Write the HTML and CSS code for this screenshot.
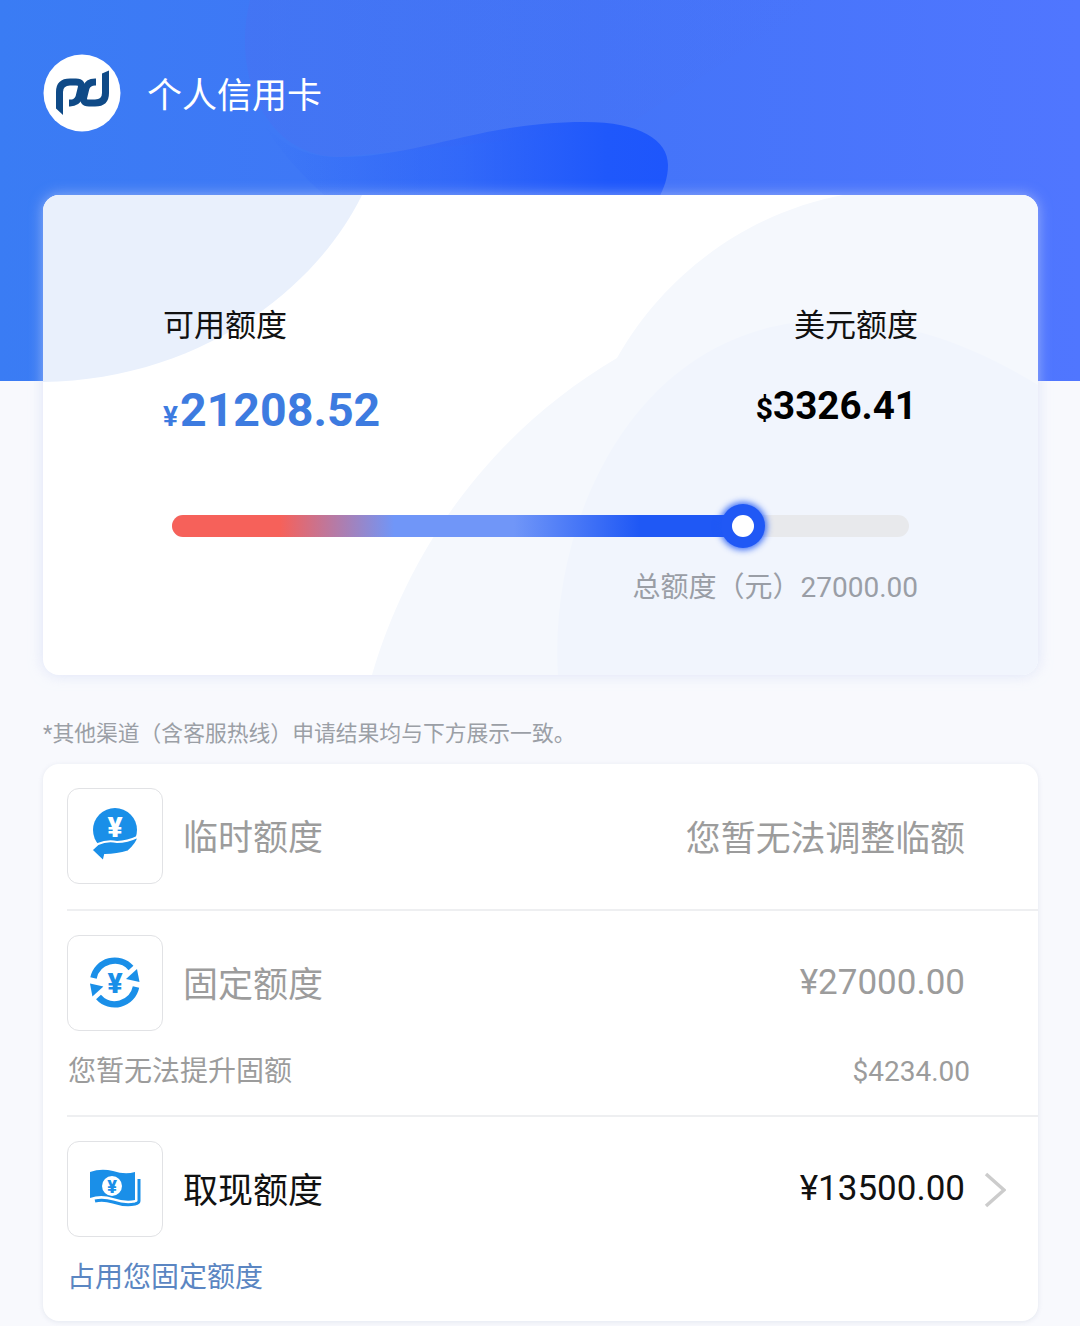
FILE: index.html
```html
<!DOCTYPE html>
<html lang="zh-CN">
<head>
<meta charset="utf-8">
<title>个人信用卡</title>
<link rel="stylesheet" href="styles.css">
</head>
<body>
<div class="page">
  <header class="hero">
    <svg class="hero-art" viewBox="0 0 1080 381" preserveAspectRatio="none" aria-hidden="true">
      <defs>
        <linearGradient id="heroBg" x1="0" y1="0" x2="1" y2="0"><stop offset="0" stop-color="#3a7cf4"/><stop offset=".55" stop-color="#4374f8"/><stop offset="1" stop-color="#5076ff"/></linearGradient>
        <linearGradient id="lightBlob" x1="0" y1="0" x2="1" y2="0"><stop offset="0" stop-color="#4a6ff0" stop-opacity=".4"/><stop offset="1" stop-color="#4a6ff0" stop-opacity="0"/></linearGradient>
        <linearGradient id="darkBlob" x1="0" y1="0" x2="1" y2="0"><stop offset="0" stop-color="#1f58fb" stop-opacity="0"/><stop offset=".5" stop-color="#1f58fb" stop-opacity=".45"/><stop offset=".85" stop-color="#1f58fb"/><stop offset="1" stop-color="#1e56fc"/></linearGradient>
      </defs>
      <rect width="1080" height="381" fill="url(#heroBg)"/>
      <path d="M250 0C232 70 262 157 340 157L620 130L820 0Z" fill="url(#lightBlob)"/>
      <path d="M260 120C285 150 312 157 340 157C420 157 480 122 585 122C640 122 668 140 668 165C668 178 664 188 658 200H330C300 175 280 150 260 120Z" fill="url(#darkBlob)"/>
    </svg>
    <div class="brand">
      <svg class="logo" viewBox="0 0 78 78" aria-hidden="true">
        <circle cx="39" cy="39" r="38.5" fill="#fff"/>
        <path class="logo-p" d="M16.5 54V38Q16.5 28 27 28H33Q40 28 38 35L36 43Q34 49 27 49H26"/>
        <path class="logo-p" d="M62.5 23V39Q62.5 49 52 49H46Q39 49 41 42L43 34Q45 28 52 28H53"/>
        <path class="logo-end" d="M13 52H20V61L13 54.5Z"/>
        <path class="logo-end" d="M59 25H66V16.5L59 19.5Z"/>
      </svg>
      <h1 class="brand-name">个人信用卡</h1>
    </div>
  </header>

  <main class="content">
    <section class="limit-card">
      <svg class="card-art" viewBox="0 0 995 480" preserveAspectRatio="none" aria-hidden="true">
        <path d="M0 0H319C270 100 150 185 0 187Z" fill="#e9f0fc"/>
        <path d="M800 0C720 15 630 65 574 163C460 230 370 340 329 480H995V0Z" fill="#f5f8fd"/>
        <path d="M515 480C505 330 590 125 790 125C860 125 930 150 995 190V480Z" fill="#f1f5fd"/>
      </svg>
      <div class="limit-row">
        <div class="limit-col">
          <div class="limit-label">可用额度</div>
          <div class="amount amount-cny"><span class="amount-sign">¥</span>21208.52</div>
        </div>
        <div class="limit-col limit-col-right">
          <div class="limit-label">美元额度</div>
          <div class="amount amount-usd"><span class="amount-sign">$</span>3326.41</div>
        </div>
      </div>
      <div class="slider">
        <div class="slider-fill"></div>
        <div class="slider-thumb"></div>
      </div>
      <div class="total">总额度（元）27000.00</div>
    </section>

    <p class="note">*其他渠道（含客服热线）申请结果均与下方展示一致。</p>

    <section class="list">
      <div class="item">
        <div class="item-head">
          <div class="icon-box">
            <svg viewBox="1 1 94 94" class="icon" aria-hidden="true">
              <circle cx="48" cy="42" r="22" fill="#1a8fe8"/>
              <text x="48" y="48.5" class="icon-yen icon-yen-lg">¥</text>
              <path d="M24.5 62L31 56Q40 52 50 54Q60 54 71.5 48.5Q70 56 61 63.5Q50 67 38 67L36.5 73.5Z" fill="#1a8fe8" stroke="#fff" stroke-width="2"/>
            </svg>
          </div>
          <div class="item-label muted">临时额度</div>
          <div class="item-value muted cjk-value">您暂无法调整临额</div>
        </div>
      </div>

      <div class="item">
        <div class="item-head">
          <div class="icon-box">
            <svg viewBox="1 1 94 94" class="icon" aria-hidden="true">
              <path d="M26.5 43A21.7 21.7 0 0 1 64 33" class="icon-arc"/>
              <path d="M69 52A21.7 21.7 0 0 1 31.5 62" class="icon-arc"/>
              <path d="M59 44L72.5 47L70 34Z" fill="#1a8fe8"/>
              <path d="M36.4 51.4L23 48.4L25.4 61.4Z" fill="#1a8fe8"/>
              <text x="48" y="57.5" class="icon-yen icon-yen-blue">¥</text>
            </svg>
          </div>
          <div class="item-label muted">固定额度</div>
          <div class="item-value muted">¥27000.00</div>
        </div>
        <div class="item-sub">
          <span>您暂无法提升固额</span>
          <span>$4234.00</span>
        </div>
      </div>

      <div class="item item-last">
        <div class="item-head">
          <div class="icon-box">
            <svg viewBox="1 1 94 94" class="icon" aria-hidden="true">
              <path d="M23 31Q34 27 46 30Q58 34 68 31V59Q58 61 46 57Q34 53 23 57Z" fill="#1a8fe8"/>
              <path d="M72 38V60Q72 62 68 63Q58 65 46 61Q36 58 28 60" fill="none" stroke="#1a8fe8" stroke-width="3"/>
              <circle cx="45" cy="45" r="10" fill="#fff"/>
              <text x="45" y="51.5" class="icon-yen icon-yen-sm">¥</text>
            </svg>
          </div>
          <div class="item-label">取现额度</div>
          <div class="item-value">¥13500.00</div>
          <svg class="chevron" viewBox="0 0 22 36" aria-hidden="true"><path d="M2 2L20 18L2 34"/></svg>
        </div>
        <div class="item-link">占用您固定额度</div>
      </div>
    </section>
  </main>
</div>
</body>
</html>
```
FILE: styles.css
```css
* { box-sizing: border-box; }
html, body { margin: 0; padding: 0; }
body {
  width: 1080px;
  height: 1326px;
  overflow: hidden;
  background: #f8f9fd;
  font-family: Roboto, "Noto Sans CJK SC", sans-serif;
}
.page { position: relative; height: 1326px; overflow: hidden; }

.hero { position: relative; height: 381px; overflow: hidden; }
.hero-art { position: absolute; inset: 0; width: 100%; height: 100%; display: block; }
.brand { position: relative; display: flex; align-items: center; gap: 26px; padding: 54px 0 0 43px; }
.logo { width: 78px; height: 78px; display: block; }
.logo-p { fill: none; stroke: #0f4a87; stroke-width: 7; }
.logo-end { fill: #0f4a87; }
.brand-name { margin: 0; padding-top: 8px; font-size: 35px; font-weight: 400; color: #fff; line-height: 70px; }

.content { position: relative; margin-top: -186px; padding: 0 42px 0 43px; }

.limit-card {
  position: relative;
  height: 480px;
  padding: 109px 120px 0 120px;
  background: #fff;
  border-radius: 16px;
  overflow: hidden;
  box-shadow: 0 0 14px rgba(205, 215, 245, .6);
}
.card-art { position: absolute; inset: 0; width: 100%; height: 100%; display: block; }
.limit-row { position: relative; display: flex; justify-content: space-between; }
.limit-col { display: flex; flex-direction: column; align-items: flex-start; }
.limit-col-right { align-items: flex-end; }
.limit-label { font-size: 31px; line-height: 44px; color: #111; }
.amount { font-weight: 700; line-height: 60px; }
.amount-cny { color: #3d7be0; font-size: 46.5px; margin-top: 32px; }
.amount-cny .amount-sign { margin-right: 2px; }
.amount-usd { color: #000; font-size: 38.6px; margin-top: 28px; margin-right: 1px; }
.amount-sign { font-size: 28px; }
.amount-usd .amount-sign { font-size: 30px; }

.slider { position: relative; margin: 68px 9px 0 9px; height: 22px; border-radius: 11px; background: #e8e9ec; }
.slider-fill {
  position: absolute; left: 0; top: 0; bottom: 0; width: 570px;
  border-radius: 11px 0 0 11px;
  background: linear-gradient(90deg, #f6615a 0, #f6615a 19%, #7096f8 39%, #7096f8 60%, #1f58f5 82%, #1f58f5 100%);
}
.slider-thumb {
  position: absolute; left: 560px; top: 0;
  width: 22px; height: 22px; border-radius: 50%;
  background: #fff;
  box-shadow: 0 0 0 11px #2058f5, 0 0 6px 13px rgba(32, 88, 245, .85);
}
.total { position: relative; margin-top: 33px; text-align: right; font-size: 28px; line-height: 36px; color: #9a9ea6; }

.note { margin: 47px 0 0; font-size: 21.8px; line-height: 24px; color: #9b9fa6; }

.list { margin-top: 18px; height: 557px; background: #fff; border-radius: 16px; padding-left: 24px; box-shadow: 0 1px 5px rgba(215, 220, 232, .6); }
.item { border-bottom: 2px solid #eeeff1; padding: 24px 0 0; height: 147px; }
.item + .item { height: 206px; }
.item-last, .item + .item.item-last { border-bottom: 0; height: 204px; }
.item-head { display: flex; align-items: center; padding-right: 73px; position: relative; }
.icon-box { width: 96px; height: 96px; border: 1px solid #e1e2e5; border-radius: 12px; background: #fff; flex: none; }
.icon { width: 94px; height: 94px; display: block; margin: 0; }
.icon-arc { fill: none; stroke: #1a8fe8; stroke-width: 6.5; }
.icon-yen { font-family: Roboto, sans-serif; font-weight: 900; text-anchor: middle; fill: #fff; }
.icon-yen-lg { font-size: 28px; }
.icon-yen-blue { font-size: 28px; fill: #1a8fe8; }
.icon-yen-sm { font-size: 18px; fill: #1a8fe8; }
.item-label { margin-left: 20px; flex: 1; padding-top: 6px; font-size: 35px; line-height: 48px; color: #111; }
.item-value { font-size: 35px; line-height: 48px; color: #111; }
.muted { color: #9c9c9c; }
.cjk-value { font-size: 34.9px; padding-top: 8px; }
.chevron { position: absolute; right: 32px; top: 31px; width: 22px; height: 36px; fill: none; stroke: #cccccc; stroke-width: 3.5; }
.item-sub { display: flex; justify-content: space-between; margin-top: 23px; padding-left: 1px; padding-right: 68px; font-size: 28px; line-height: 36px; color: #9c9c9c; }
.item-link { margin-top: 23px; font-size: 28px; line-height: 36px; color: #5b86c2; }
```
